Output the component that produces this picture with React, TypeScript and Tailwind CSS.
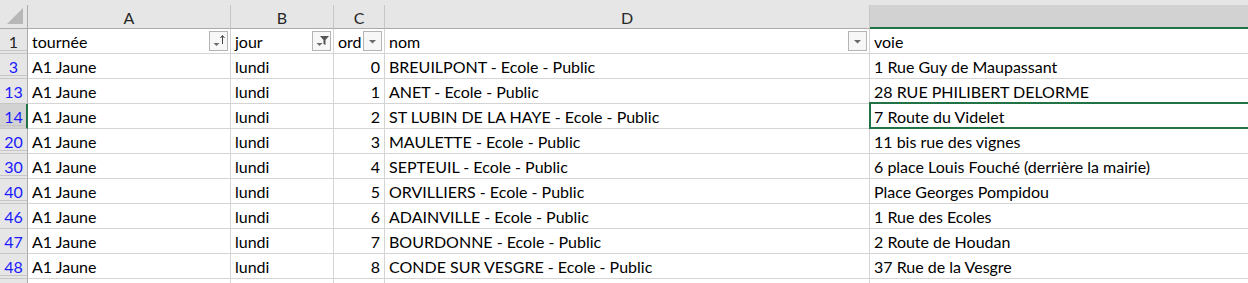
import React from "react";

const rows = [
  { n: "3", c: "0", d: "BREUILPONT - Ecole - Public", e: "1 Rue Guy de Maupassant", hid: true },
  { n: "13", c: "1", d: "ANET - Ecole - Public", e: "28 RUE PHILIBERT DELORME", hid: false },
  { n: "14", c: "2", d: "ST LUBIN DE LA HAYE - Ecole - Public", e: "7 Route du Videlet", hid: true, sel: true },
  { n: "20", c: "3", d: "MAULETTE - Ecole - Public", e: "11 bis rue des vignes", hid: true },
  { n: "30", c: "4", d: "SEPTEUIL - Ecole - Public", e: "6 place Louis Fouché (derrière la mairie)", hid: true },
  { n: "40", c: "5", d: "ORVILLIERS - Ecole - Public", e: "Place Georges Pompidou", hid: true },
  { n: "46", c: "6", d: "ADAINVILLE - Ecole - Public", e: "1 Rue des Ecoles", hid: false },
  { n: "47", c: "7", d: "BOURDONNE - Ecole - Public", e: "2 Route de Houdan", hid: false },
  { n: "48", c: "8", d: "CONDE SUR VESGRE - Ecole - Public", e: "37 Rue de la Vesgre", hid: true },
];

const cell = "h-[25px] border-r border-b border-[#d4d4d4] flex items-center pt-[2px] px-[4px] whitespace-nowrap overflow-hidden";

function FilterBtn({ kind }: { kind: "sort" | "filter" | "plain" }) {
  return (
    <div className="absolute right-[2px] top-[2px] w-[19px] h-[20px] border border-[#b4b4b4] bg-[#f7f7f7]">
      <svg width="17" height="18" viewBox="0 0 17 18" className="block">
        {kind === "plain" && <path d="M5 8 L12 8 L8.5 11.5 Z" fill="#6b6b6b" />}
        {kind === "sort" && (
          <>
            <path d="M3.5 11 L9.5 11 L6.5 14 Z" fill="#6b6b6b" />
            <path d="M12.5 4 L12.5 12" stroke="#444" strokeWidth="1" />
            <path d="M10.5 6 L12.5 3.5 L14.5 6" stroke="#444" strokeWidth="1" fill="none" />
          </>
        )}
        {kind === "filter" && (
          <>
            <path d="M3.5 11 L9.5 11 L6.5 14 Z" fill="#6b6b6b" />
            <path d="M7 4 L16 4 L12.5 8 L12.5 13 L10.5 12 L10.5 8 Z" fill="#555" />
          </>
        )}
      </svg>
    </div>
  );
}

export default function App() {
  return (
    <div className="w-[1248px] h-[283px] overflow-hidden bg-white font-['Lato','Liberation_Sans',sans-serif] text-[16px] text-black leading-none">
      {/* column header */}
      <div className="flex h-[29px] bg-[#e6e6e6]">
        <div className="w-[28px] shrink-0 mt-[5px] h-[24px] border-r border-b border-[#ababab] relative">
          <svg width="27" height="23" className="absolute left-0 top-0">
            <path d="M7 19 L23 19 L23 3 Z" fill="#b7b7b7" />
          </svg>
        </div>
        {[
          ["A", "w-[203px]"],
          ["B", "w-[103px]"],
          ["C", "w-[51px]"],
          ["D", "w-[485px]"],
        ].map(([l, w]) => (
          <div key={l} className={`${w} shrink-0 mt-[5px] h-[24px] border-r border-b border-r-[#c6c6c6] border-b-[#ababab] flex items-center justify-center text-[#262626] pt-[2px]`}>
            {l}
          </div>
        ))}
        <div className="flex-1 mt-[5px] h-[24px] bg-[#d2d2d2] border-b-2 border-[#217346]" />
      </div>

      {/* row 1 */}
      <div className="flex">
        <div className="w-[28px] shrink-0 h-[25px] bg-[#e6e6e6] border-r border-b border-r-[#ababab] border-b-[#c6c6c6] shadow-[inset_0_-2px_0_#e6e6e6,inset_0_-3px_0_#c6c6c6] flex items-center justify-center pt-[2px] text-[#262626]">
          1
        </div>
        <div className={`${cell} w-[203px] shrink-0 relative`}>tournée<FilterBtn kind="sort" /></div>
        <div className={`${cell} w-[103px] shrink-0 relative`}>jour<FilterBtn kind="filter" /></div>
        <div className={`${cell} w-[51px] shrink-0 relative`}>ord<FilterBtn kind="plain" /></div>
        <div className={`${cell} w-[485px] shrink-0 relative`}>nom<FilterBtn kind="plain" /></div>
        <div className={`${cell} flex-1 border-r-0`}>voie</div>
      </div>

      {rows.map((r) => (
        <div key={r.n} className="flex">
          <div
            className={`w-[28px] shrink-0 h-[25px] border-b border-b-[#c6c6c6] flex items-center justify-center pt-[2px] text-[#1a1aff] ${
              r.sel ? "bg-[#d2d2d2] border-r-2 border-r-[#217346] pl-[1px]" : "bg-[#e6e6e6] border-r border-r-[#ababab]"
            } ${r.hid ? (r.sel ? "shadow-[inset_0_-2px_0_#d2d2d2,inset_0_-3px_0_#c6c6c6]" : "shadow-[inset_0_-2px_0_#e6e6e6,inset_0_-3px_0_#c6c6c6]") : ""}`}
          >
            {r.n}
          </div>
          <div className={`${cell} w-[203px] shrink-0`}>A1 Jaune</div>
          <div className={`${cell} w-[103px] shrink-0`}>lundi</div>
          <div className={`${cell} w-[51px] shrink-0 justify-end`}>{r.c}</div>
          <div className={`${cell} w-[485px] shrink-0`}>{r.d}</div>
          <div className={`${cell} flex-1 border-r-0 ${r.sel ? "relative overflow-visible" : ""}`}>
            {r.e}
            {r.sel && <div className="absolute left-[-1px] top-[-2px] bottom-[-1px] right-[-4px] border-2 border-[#217346]" />}
          </div>
        </div>
      ))}

      {/* partial row 49 */}
      <div className="flex">
        <div className="w-[28px] shrink-0 h-[25px] bg-[#e6e6e6] border-r border-r-[#ababab]" />
        <div className="w-[203px] shrink-0 h-[25px] border-r border-[#d4d4d4]" />
        <div className="w-[103px] shrink-0 h-[25px] border-r border-[#d4d4d4]" />
        <div className="w-[51px] shrink-0 h-[25px] border-r border-[#d4d4d4]" />
        <div className="w-[485px] shrink-0 h-[25px] border-r border-[#d4d4d4]" />
        <div className="flex-1 h-[25px]" />
      </div>
    </div>
  );
}
